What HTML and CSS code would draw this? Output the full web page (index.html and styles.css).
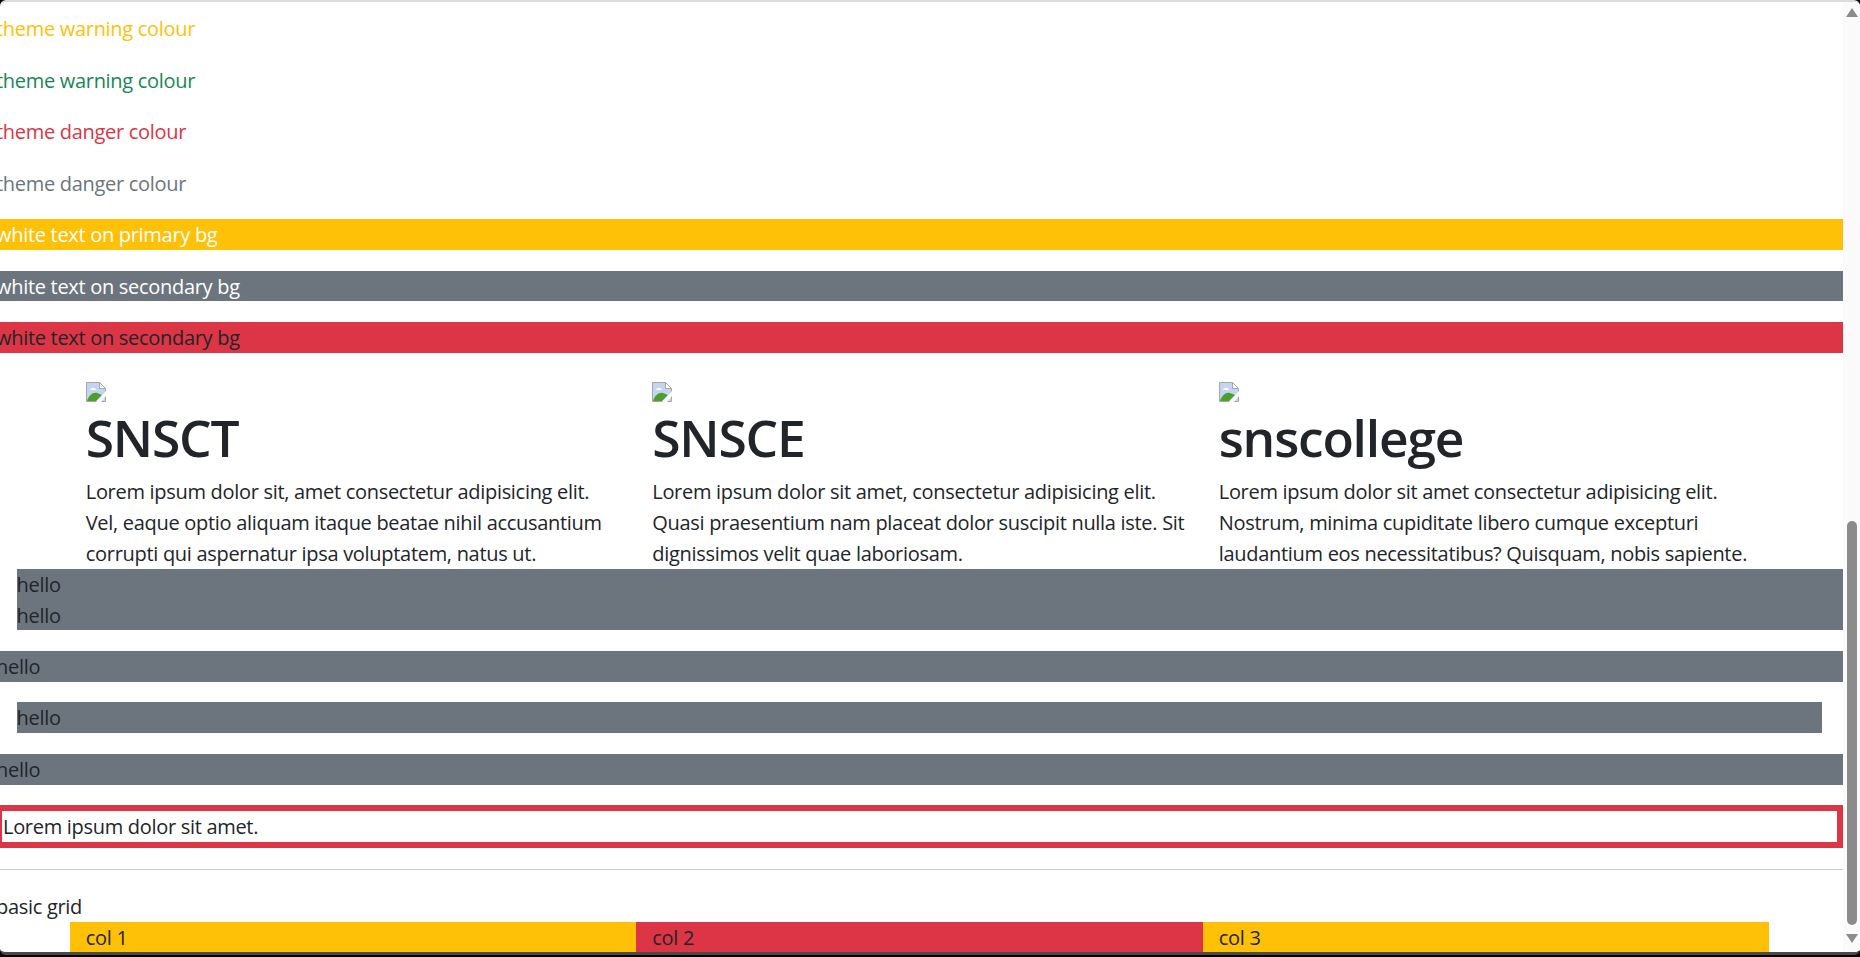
FILE: index.html
```html
<!DOCTYPE html>
<html lang="en">
<head>
<meta charset="utf-8">
<title>Bootstrap practice</title>
<link rel="stylesheet" href="styles.css">
</head>
<body>
<div class="window">
  <main class="page">
    <p class="line text-warning">theme warning colour</p>
    <p class="line text-success">theme warning colour</p>
    <p class="line text-danger">theme danger colour</p>
    <p class="line text-secondary">theme danger colour</p>
    <p class="line bg-warning text-white">white text on primary bg</p>
    <p class="line bg-secondary text-white">white text on secondary bg</p>
    <p class="line bg-danger">white text on secondary bg</p>

    <section class="container cards">
      <article class="card">
        <div class="pic"><svg class="broken" viewBox="0 0 20 20" width="20" height="20" aria-label="broken image"><path d="M.5.5h13l6 6v13H.5z" fill="#c3d5f3" stroke="#a6a6a6"/><path d="M13.500.5v6h6z" fill="#fff" stroke="#a6a6a6"/><path d="M4 8c1-3 5-3 6 0z" fill="#fff"/><path d="M1 19c2-6 6-9 10-8l5 2-6 6z" fill="#4e9e2c"/><path d="M10 20L20 9v5l-5 6z" fill="#fff"/></svg></div>
        <h1 class="title">SNSCT</h1>
        <p class="body">Lorem ipsum dolor sit, amet consectetur adipisicing elit. Vel, eaque optio aliquam itaque beatae nihil accusantium corrupti qui aspernatur ipsa voluptatem, natus ut.</p>
      </article>
      <article class="card">
        <div class="pic"><svg class="broken" viewBox="0 0 20 20" width="20" height="20" aria-label="broken image"><path d="M.5.5h13l6 6v13H.5z" fill="#c3d5f3" stroke="#a6a6a6"/><path d="M13.500.5v6h6z" fill="#fff" stroke="#a6a6a6"/><path d="M4 8c1-3 5-3 6 0z" fill="#fff"/><path d="M1 19c2-6 6-9 10-8l5 2-6 6z" fill="#4e9e2c"/><path d="M10 20L20 9v5l-5 6z" fill="#fff"/></svg></div>
        <h1 class="title">SNSCE</h1>
        <p class="body">Lorem ipsum dolor sit amet, consectetur adipisicing elit. Quasi praesentium nam placeat dolor suscipit nulla iste. Sit dignissimos velit quae laboriosam.</p>
      </article>
      <article class="card">
        <div class="pic"><svg class="broken" viewBox="0 0 20 20" width="20" height="20" aria-label="broken image"><path d="M.5.5h13l6 6v13H.5z" fill="#c3d5f3" stroke="#a6a6a6"/><path d="M13.500.5v6h6z" fill="#fff" stroke="#a6a6a6"/><path d="M4 8c1-3 5-3 6 0z" fill="#fff"/><path d="M1 19c2-6 6-9 10-8l5 2-6 6z" fill="#4e9e2c"/><path d="M10 20L20 9v5l-5 6z" fill="#fff"/></svg></div>
        <h1 class="title">snscollege</h1>
        <p class="body">Lorem ipsum dolor sit amet consectetur adipisicing elit. Nostrum, minima cupiditate libero cumque excepturi laudantium eos necessitatibus? Quisquam, nobis sapiente.</p>
      </article>
    </section>

    <div class="hello-stack">
      <div class="hello-a">hello</div>
      <div class="hello-b">hello</div>
    </div>
    <div class="band">hello</div>
    <div class="band inset">hello</div>
    <div class="band">hello</div>
    <div class="outlined">Lorem ipsum dolor sit amet.</div>
    <hr class="rule">
    <p class="caption">basic grid</p>
    <section class="container grid-row">
      <div class="cell bg-warning">col 1</div>
      <div class="cell bg-danger">col 2</div>
      <div class="cell bg-warning">col 3</div>
    </section>
  </main>
  <aside class="scrollbar">
    <svg class="arrow" viewBox="0 0 12 9" width="12" height="9"><path d="M6 0l6 9H0z" fill="#8b8b8b"/></svg>
    <div class="track"><div class="thumb"></div></div>
    <svg class="arrow" viewBox="0 0 12 9" width="12" height="9"><path d="M0 0h12L6 9z" fill="#8b8b8b"/></svg>
  </aside>
</div>
</body>
</html>
```
FILE: styles.css
```css
* { box-sizing: border-box; }
html, body { margin: 0; height: 100%; overflow: hidden; background: #000; }
body {
  font-family: "Open Sans", "Noto Sans", sans-serif;
  font-size: 20px;
  letter-spacing: -0.3px;
  line-height: 30.9px;
  color: #212529;
}
.window {
  height: 955px;
  display: flex;
  background: #fff;
  border-top: 2px solid #dcdcdc;
  border-bottom: 3px solid #4b4b4b;
  border-radius: 6px;
  overflow: hidden;
}
.page {
  flex: 1;
  min-width: 0;
  margin-left: -4px;
  padding-top: 11px;
  overflow: hidden;
}
.line, .band, .caption, .cell { padding-top: 1px; line-height: 29.9px; }
.line { margin: 0 0 20.6px; }
.text-warning { color: #ffc107; }
.text-success { color: #198754; }
.text-danger { color: #dc3545; }
.text-secondary { color: #6c757d; }
.text-white { color: #fff; }
.bg-warning { background: #ffc107; }
.bg-secondary { background: #6c757d; }
.bg-danger { background: #dc3545; }

.container {
  width: 1699.5px;
  margin: 0 auto;
  display: grid;
  grid-template-columns: repeat(3, 1fr);
}
.card { padding: 0 12px 0 16px; }
.pic { height: 30.9px; display: flex; align-items: flex-end; padding-bottom: 2px; }
.broken { display: block; }
.title {
  margin: 0 0 10.3px;
  font-size: 51.5px;
  font-weight: 600;
  line-height: 61.8px;
  letter-spacing: -1.2px;
  padding-top: 3px;
  height: 61.8px;
}
.body { margin: 0; padding-top: 1px; line-height: 30.6px; }

.hello-stack { background: #6c757d; margin-left: 20.6px; margin-bottom: 20.6px; }
.hello-a, .hello-b { padding-top: 1px; line-height: 29.4px; }
.band { background: #6c757d; margin-bottom: 20.6px; }
.inset { margin-left: 20.6px; margin-right: 20.6px; }
.outlined {
  border: 6px solid #dc3545;
  padding: 1px 1px 0;
  line-height: 29.9px;
  margin-bottom: 20.6px;
}
.rule { margin: 0 0 21.4px; border: 0; border-top: 1px solid #c8c9ca; }
.caption { margin: 0; }
.cell { padding-left: 16px; padding-right: 16px; }

.scrollbar {
  width: 17px;
  flex: none;
  background: #fafafa;
  display: flex;
  flex-direction: column;
  align-items: center;
  padding: 6px 0 9px;
}
.arrow { display: block; flex: none; }
.track { flex: 1; width: 10px; display: flex; flex-direction: column; justify-content: flex-end; padding-bottom: 9px; }
.thumb { height: 404px; background: #8b8b8b; border-radius: 5px; }
```
